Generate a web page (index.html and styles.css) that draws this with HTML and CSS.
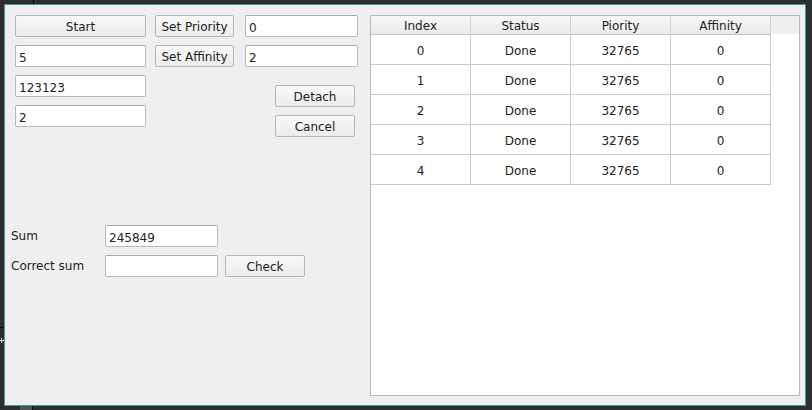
FILE: index.html
```html
<!DOCTYPE html>
<html>
<head>
<meta charset="utf-8">
<link rel="stylesheet" href="styles.css">
</head>
<body>
<div class="desk-mark mark-top"></div>
<div class="desk-mark mark-left"></div>
<div class="desk-mark mark-plus-h"></div>
<div class="desk-mark mark-plus-v"></div>
<div class="desk-mark mark-bottom"></div>
<div class="window">
  <div class="left">
    <div class="top">
      <div class="col col-a">
        <button class="btn">Start</button>
        <input class="field" type="text" value="5">
        <input class="field" type="text" value="123123">
        <input class="field" type="text" value="2">
      </div>
      <div class="col col-b">
        <button class="btn">Set Priority</button>
        <button class="btn">Set Affinity</button>
      </div>
      <div class="col col-c">
        <input class="field" type="text" value="0">
        <input class="field" type="text" value="2">
        <button class="btn btn-small detach">Detach</button>
        <button class="btn btn-small">Cancel</button>
      </div>
    </div>
    <div class="bottom">
      <div class="row">
        <span class="label">Sum</span>
        <input class="field field-sum" type="text" value="245849">
      </div>
      <div class="row">
        <span class="label">Correct sum</span>
        <input class="field field-sum" type="text" value="">
        <button class="btn btn-small check">Check</button>
      </div>
    </div>
  </div>
  <div class="table-frame">
    <table class="grid">
      <thead>
        <tr><th>Index</th><th>Status</th><th>Piority</th><th>Affinity</th></tr>
      </thead>
      <tbody>
        <tr><td>0</td><td>Done</td><td>32765</td><td>0</td></tr>
        <tr><td>1</td><td>Done</td><td>32765</td><td>0</td></tr>
        <tr><td>2</td><td>Done</td><td>32765</td><td>0</td></tr>
        <tr><td>3</td><td>Done</td><td>32765</td><td>0</td></tr>
        <tr><td>4</td><td>Done</td><td>32765</td><td>0</td></tr>
      </tbody>
    </table>
  </div>
</div>
</body>
</html>
```
FILE: styles.css
```css
* { box-sizing: border-box; }
html, body {
  margin: 0;
  padding: 0;
  width: 812px;
  height: 410px;
  overflow: hidden;
}
body {
  background: #2c2e2f;
  font-family: "DejaVu Sans", "Liberation Sans", sans-serif;
  font-size: 12px;
  color: #222222;
  position: relative;
}
.desk-mark { position: absolute; }
.mark-top { left: 33px; top: 0; width: 1px; height: 4px; background: #0c0c0c; }
.mark-left { left: 0; top: 327px; width: 4px; height: 1px; background: #0e0e0e; }
.mark-plus-h { left: 0; top: 340px; width: 4px; height: 1px; background: #d0d0d0; }
.mark-plus-v { left: 1px; top: 338px; width: 1px; height: 5px; background: #d0d0d0; }
.mark-bottom { left: 20px; top: 406px; width: 13px; height: 4px; background: #4f5152; border-right: 1px solid #0c0c0c; }

.window {
  margin: 4px 0 0 4px;
  width: 802px;
  height: 402px;
  border: 1px solid #3f9c9c;
  background: #efefef;
  display: flex;
  padding: 10px 5px 9px 6px;
}
.left {
  width: 359px;
  display: flex;
  flex-direction: column;
}
.top {
  display: flex;
  margin-left: 4px;
}
.col {
  display: flex;
  flex-direction: column;
  gap: 8px;
  align-items: flex-start;
}
.col-a { width: 131px; }
.col-b { width: 79px; margin-left: 9px; }
.col-c { width: 113px; margin-left: 11px; }

.btn {
  height: 22px;
  width: 100%;
  margin: 0;
  padding: 2px 0 0 0;
  border: 1px solid #b7b7b7;
  border-radius: 2px;
  background: linear-gradient(#f9f9f9, #ebebeb);
  font-family: "DejaVu Sans", "Liberation Sans", sans-serif;
  font-size: 12px;
  color: #222222;
  text-align: center;
  line-height: 18px;
}
.btn-small { width: 80px; }
.detach { margin-left: 30px; margin-top: 10px; }
.col-c .btn-small + .btn-small { margin-left: 30px; }

.field {
  height: 22px;
  width: 100%;
  margin: 0;
  padding: 3px 3px 0 3px;
  border: 1px solid #bababa;
  border-top-color: #a9a9a9;
  border-radius: 2px;
  background: #ffffff;
  font-family: "DejaVu Sans", "Liberation Sans", sans-serif;
  font-size: 12px;
  color: #222222;
  outline: none;
}

.bottom {
  margin-top: 88px;
  display: flex;
  flex-direction: column;
  gap: 8px;
}
.row {
  display: flex;
  align-items: center;
  height: 22px;
}
.label {
  width: 94px;
  line-height: 22px;
}
.field-sum { width: 113px; }
.check { margin-left: 7px; }

.table-frame {
  width: 430px;
  height: 381px;
  border: 1px solid #b9b9b9;
  background: linear-gradient(#efefef 0, #efefef 18px, #ffffff 18px);
}
.grid {
  border-collapse: separate;
  border-spacing: 0;
  table-layout: fixed;
  width: 400px;
}
.grid th, .grid td {
  width: 100px;
  text-align: center;
  font-weight: normal;
  font-size: 12px;
  color: #222222;
}
.grid th {
  height: 19px;
  padding: 2px 0 0 0;
  line-height: 16px;
  background: linear-gradient(#f7f7f7, #eaeaea);
  border-right: 1px solid #d3d3d3;
  border-bottom: 1px solid #c4c4c4;
}
.grid td {
  height: 30px;
  padding: 3px 0 0 0;
  line-height: 26px;
  background: #ffffff;
  border-right: 1px solid #cbcbcb;
  border-bottom: 1px solid #cbcbcb;
}
```
